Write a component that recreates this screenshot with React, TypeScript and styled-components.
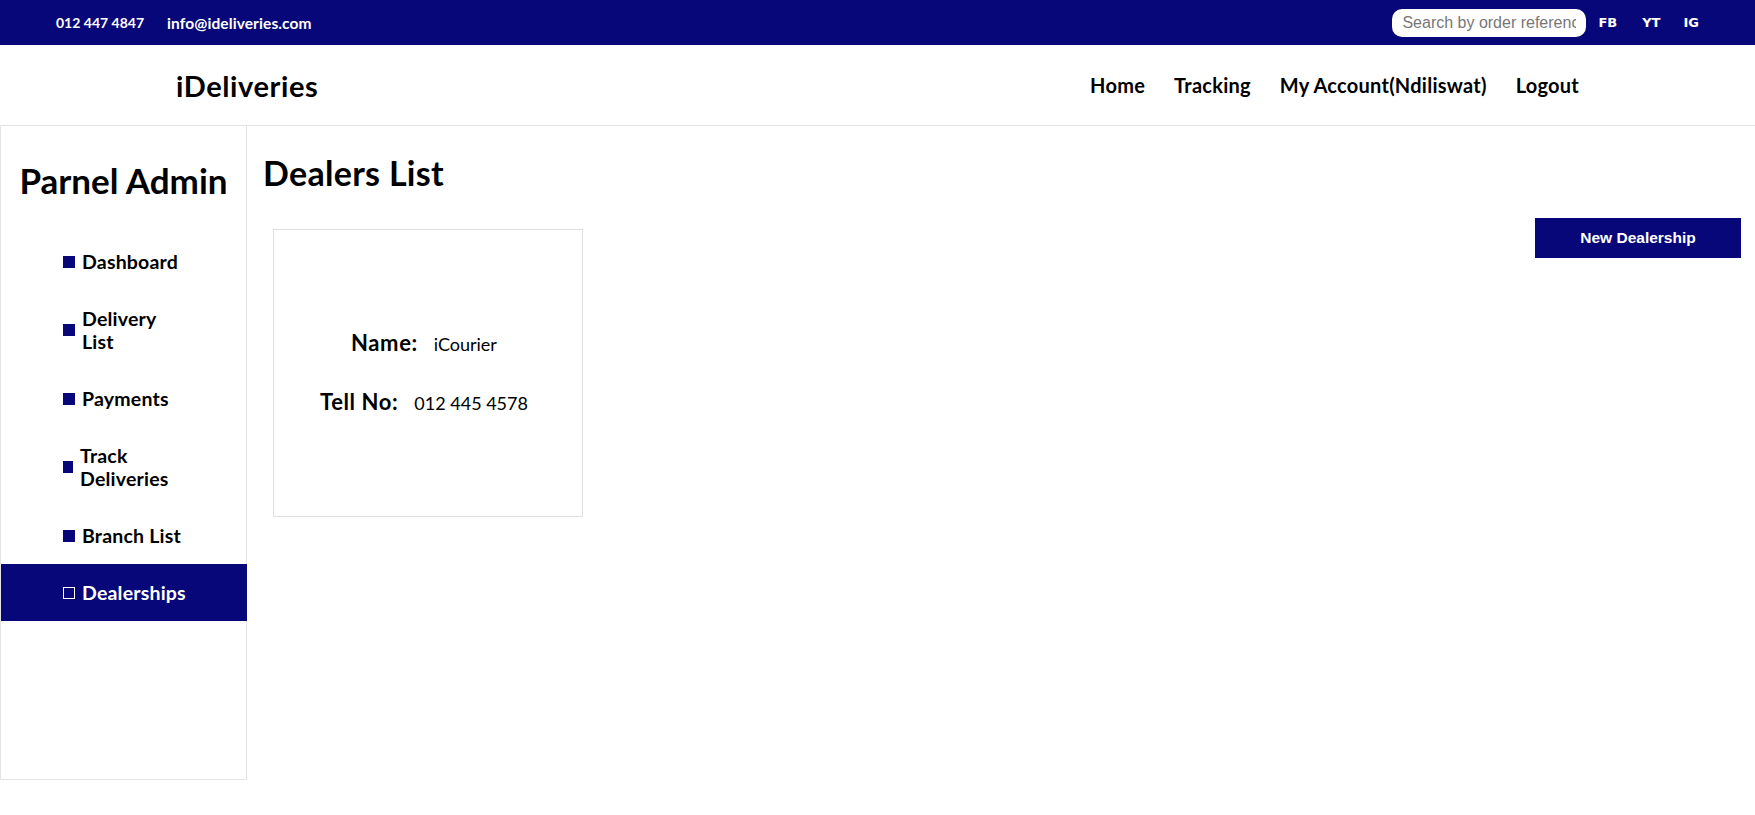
import React from "react";
import styled, { createGlobalStyle } from "styled-components";

const NAVY = "#08077a";
const GILL = `"Lato", "Open Sans", "Liberation Sans", sans-serif`;

const GlobalStyle = createGlobalStyle`
  html, body { margin: 0; padding: 0; background: #fff; }
  body { font-family: ${GILL}; color: #000; }
  * { box-sizing: border-box; }
`;

const TopBar = styled.div`
  height: 45px;
  background: ${NAVY};
  display: flex;
  align-items: center;
  justify-content: space-between;
  padding: 0 56px 0 56px;
`;

const Contacts = styled.div`
  display: flex;
  gap: 23px;
  color: #fff;
  font-weight: 700;
  font-size: 14px;
  & > span + span { font-size: 15.5px; letter-spacing: 0.1px; }
`;

const TopRight = styled.div`
  display: flex;
  align-items: center;
`;

const Search = styled.input`
  width: 194px;
  height: 28px;
  border: none;
  border-radius: 10px;
  padding: 0 10px;
  font-family: "Liberation Sans", Arial, sans-serif;
  font-size: 16px;
  outline: none;
  &::placeholder { color: #777; }
`;

const Social = styled.a<{ $gap: number }>`
  color: #fff;
  font-family: "DejaVu Sans", Verdana, sans-serif;
  font-weight: 700;
  font-size: 13px;
  text-decoration: none;
  margin-left: ${(p) => p.$gap}px;
`;

const Header = styled.header`
  height: 81px;
  border-bottom: 1px solid #e3e3e3;
  display: flex;
  align-items: center;
  justify-content: space-between;
  padding: 0 176px;
`;

const Brand = styled.div`
  font-size: 29px;
  font-weight: 700;
  letter-spacing: 0.6px;
`;

const Nav = styled.nav`
  display: flex;
  gap: 29px;
`;

const NavLink = styled.a`
  font-size: 20px;
  font-weight: 700;
  letter-spacing: 0.25px;
  color: #000;
  text-decoration: none;
`;

const Body = styled.div`
  display: flex;
  align-items: flex-start;
`;

const Sidebar = styled.aside`
  width: 247px;
  height: 654px;
  flex: none;
  border: 1px solid #e3e3e3;
  border-top: none;
  padding-top: 34px;
`;

const SideTitle = styled.h2`
  margin: 0 0 33px;
  font-size: 35px;
  line-height: 40px;
  font-weight: 700;
  text-align: center;
`;

const Menu = styled.ul`
  list-style: none;
  margin: 0;
  padding: 0;
`;

const MenuItem = styled.li<{ $active?: boolean }>`
  display: flex;
  align-items: center;
  gap: 7px;
  padding: 17px 0 17px 62px;
  margin-right: -1px;
  background: ${(p) => (p.$active ? NAVY : "transparent")};
  color: ${(p) => (p.$active ? "#fff" : "#000")};
  font-size: 19.5px;
  line-height: 23px;
  font-weight: 700;
  letter-spacing: 0.2px;
`;

const Bullet = styled.span<{ $active?: boolean; $narrow?: boolean }>`
  flex: none;
  width: ${(p) => (p.$narrow ? 10 : 12)}px;
  height: 12px;
  background: ${(p) => (p.$active ? "transparent" : NAVY)};
  border: 1px solid ${(p) => (p.$active ? "#fff" : NAVY)};
`;

const Label = styled.span`
  display: flex;
  flex-direction: column;
`;

const Main = styled.main`
  flex: 1;
  padding: 29px 14px 0 16px;
`;

const PageTitle = styled.h1`
  margin: 0 0 27px;
  font-size: 34px;
  line-height: 36px;
  font-weight: 700;
  letter-spacing: 0.3px;
`;

const ContentRow = styled.div`
  display: flex;
  align-items: flex-start;
  justify-content: space-between;
`;

const CardGrid = styled.div`
  display: flex;
  flex-wrap: wrap;
  gap: 20px;
  padding: 11px 0 0 10px;
`;

const Card = styled.div`
  width: 310px;
  height: 288px;
  border: 1px solid #dedede;
  display: flex;
  flex-direction: column;
  align-items: center;
  justify-content: center;
  gap: 34px;
`;

const Field = styled.div<{ $shift: number }>`
  display: flex;
  align-items: baseline;
  gap: 16px;
  line-height: 23px;
  margin-left: ${(p) => p.$shift}px;
`;

const FieldLabel = styled.span`
  font-size: 22px;
  font-weight: 700;
  letter-spacing: 0.6px;
`;

const FieldValue = styled.span`
  font-size: 18px;
  font-weight: 400;
`;

const PrimaryButton = styled.button`
  width: 206px;
  height: 40px;
  border: none;
  background: ${NAVY};
  color: #fff;
  font-family: "Liberation Sans", Arial, sans-serif;
  font-weight: 700;
  font-size: 15.5px;
  cursor: pointer;
`;

const menu = [
  { lines: ["Dashboard"] },
  { lines: ["Delivery", "List"] },
  { lines: ["Payments"] },
  { lines: ["Track", "Deliveries"], narrow: true },
  { lines: ["Branch List"] },
  { lines: ["Dealerships"], active: true },
];

export default function App() {
  return (
    <>
      <GlobalStyle />
      <TopBar>
        <Contacts>
          <span>012 447 4847</span>
          <span>info@ideliveries.com</span>
        </Contacts>
        <TopRight>
          <Search placeholder="Search by order reference" />
          <Social $gap={12}>FB</Social>
          <Social $gap={25}>YT</Social>
          <Social $gap={23}>IG</Social>
        </TopRight>
      </TopBar>
      <Header>
        <Brand>iDeliveries</Brand>
        <Nav>
          <NavLink>Home</NavLink>
          <NavLink>Tracking</NavLink>
          <NavLink>My Account(Ndiliswat)</NavLink>
          <NavLink>Logout</NavLink>
        </Nav>
      </Header>
      <Body>
        <Sidebar>
          <SideTitle>Parnel Admin</SideTitle>
          <Menu>
            {menu.map((m) => (
              <MenuItem key={m.lines.join(" ")} $active={m.active}>
                <Bullet $active={m.active} $narrow={m.narrow} />
                <Label>
                  {m.lines.map((l) => (
                    <span key={l}>{l}</span>
                  ))}
                </Label>
              </MenuItem>
            ))}
          </Menu>
        </Sidebar>
        <Main>
          <PageTitle>Dealers List</PageTitle>
          <ContentRow>
            <CardGrid>
              <Card>
                <Field $shift={-8}>
                  <FieldLabel>Name:</FieldLabel>
                  <FieldValue>iCourier</FieldValue>
                </Field>
                <Field $shift={-8}>
                  <FieldLabel>Tell No:</FieldLabel>
                  <FieldValue>012 445 4578</FieldValue>
                </Field>
              </Card>
            </CardGrid>
            <PrimaryButton>New Dealership</PrimaryButton>
          </ContentRow>
        </Main>
      </Body>
    </>
  );
}
